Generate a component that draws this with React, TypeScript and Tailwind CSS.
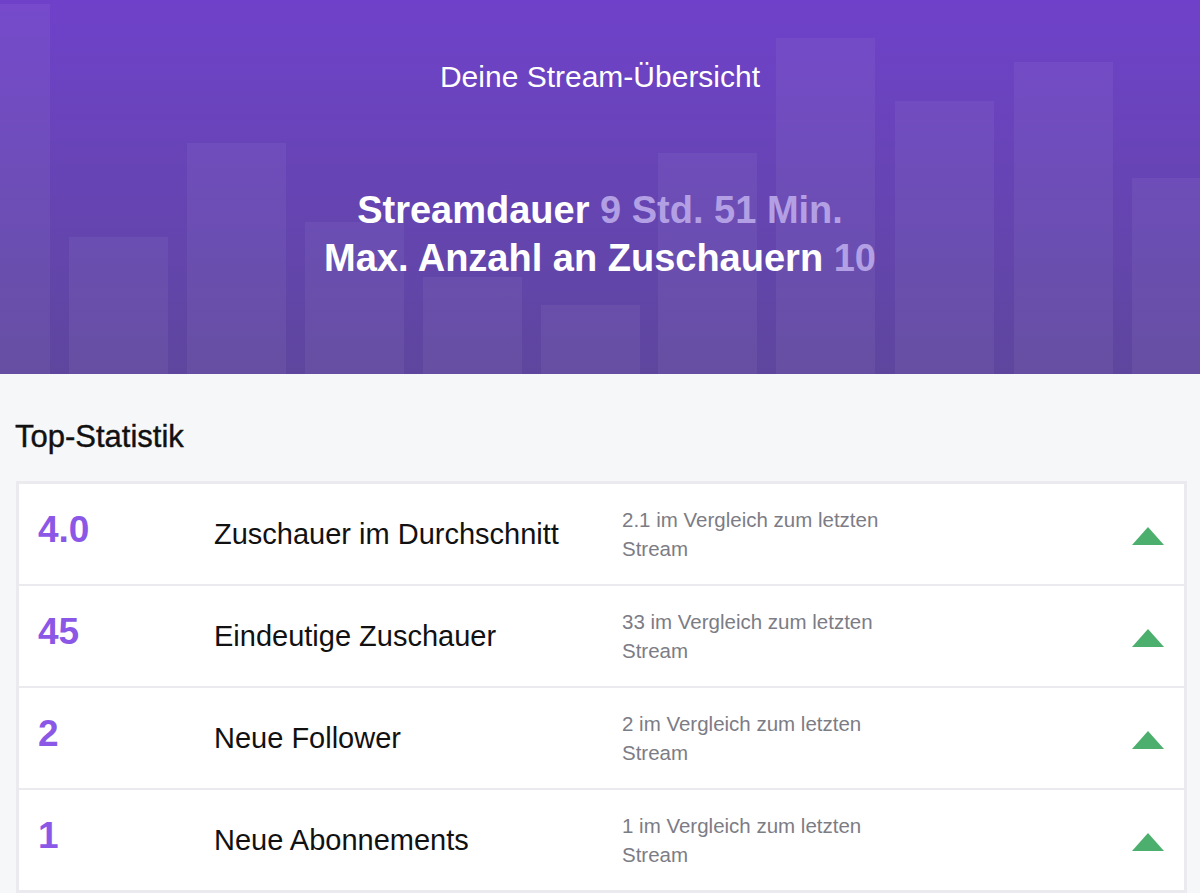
import React from "react";

const bars = [
  { x: 0, w: 50, top: 4 },
  { x: 69, w: 99, top: 237 },
  { x: 187, w: 99, top: 143 },
  { x: 305, w: 99, top: 222 },
  { x: 423, w: 99, top: 277 },
  { x: 541, w: 99, top: 305 },
  { x: 658, w: 99, top: 153 },
  { x: 776, w: 99, top: 38 },
  { x: 895, w: 99, top: 101 },
  { x: 1014, w: 99, top: 62 },
  { x: 1132, w: 68, top: 178 },
];

const rows = [
  { value: "4.0", label: "Zuschauer im Durchschnitt", cmp: "2.1 im Vergleich zum letzten" },
  { value: "45", label: "Eindeutige Zuschauer", cmp: "33 im Vergleich zum letzten" },
  { value: "2", label: "Neue Follower", cmp: "2 im Vergleich zum letzten" },
  { value: "1", label: "Neue Abonnements", cmp: "1 im Vergleich zum letzten" },
];

function Triangle() {
  return (
    <svg width="32" height="18" viewBox="0 0 32 18" className="block">
      <polygon points="16,0 32,18 0,18" fill="#4caf6d" />
    </svg>
  );
}

export default function App() {
  return (
    <div
      className="w-[1200px] h-[893px] overflow-hidden bg-[#f6f7f9]"
      style={{ fontFamily: '"Liberation Sans", Arial, sans-serif' }}
    >
      <div className="relative h-[374px] overflow-hidden bg-gradient-to-b from-[#6f41ca] to-[#5e469e]">
        <svg className="absolute inset-0" width="1200" height="374" viewBox="0 0 1200 374">
          {bars.map((b, i) => (
            <rect key={i} x={b.x} y={b.top} width={b.w} height={374 - b.top} fill="#ffffff" fillOpacity="0.05" />
          ))}
        </svg>
        <div className="relative flex flex-col items-center text-white">
          <div className="pt-[60px] text-[30px] leading-[34px]">Deine Stream-Übersicht</div>
          <div className="mt-[92px] text-center text-[38px] font-bold leading-[48px]">
            <div>
              Streamdauer <span className="text-[#b3a0e4]">9 Std. 51 Min.</span>
            </div>
            <div>
              Max. Anzahl an Zuschauern <span className="text-[#b3a0e4]">10</span>
            </div>
          </div>
        </div>
      </div>
      <div className="px-[16px]">
        <div className="pt-[46px] pb-[27px] -ml-[1px] text-[31px] leading-[34px] text-[#111] [-webkit-text-stroke:0.4px_#111]">
          Top-Statistik
        </div>
        <div className="w-[1171px] bg-[#ebebef] p-[3px] flex flex-col gap-[2px]">
          {rows.map((r) => (
            <div key={r.value} className="h-[100px] bg-white grid grid-cols-[176px_408px_1fr_auto] items-center pl-[19px] pr-[20px]">
              <div className="text-[37px] font-bold text-[#8b57e6] leading-none -mt-[10px]">{r.value}</div>
              <div className="text-[29px] text-[#111] leading-none">{r.label}</div>
              <div className="text-[20.5px] text-[#7c7c85] leading-[29px]">
                <div>{r.cmp}</div>
                <div>Stream</div>
              </div>
              <div className="pt-[4px]">
                <Triangle />
              </div>
            </div>
          ))}
        </div>
      </div>
    </div>
  );
}
